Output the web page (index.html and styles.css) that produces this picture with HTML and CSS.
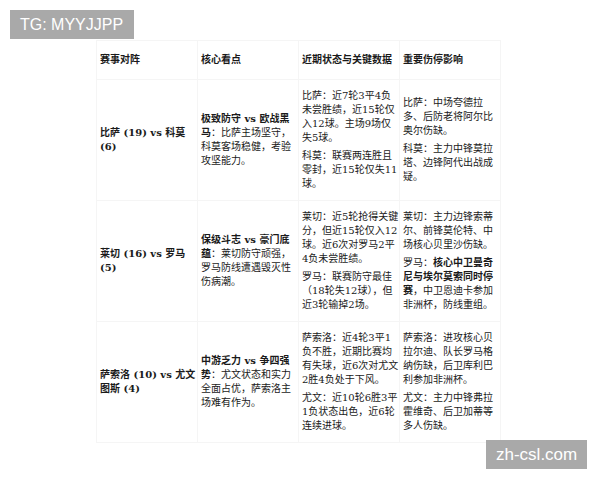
FILE: index.html
```html
<!DOCTYPE html>
<html lang="zh">
<head>
<meta charset="utf-8">
<title>赛事对阵</title>
<link rel="stylesheet" href="styles.css">
</head>
<body>
<div class="page">
  <table class="matches">
    <colgroup><col class="c"><col class="c"><col class="c"><col class="c"></colgroup>
    <thead>
      <tr><th>赛事对阵</th><th>核心看点</th><th>近期状态与关键数据</th><th>重要伤停影响</th></tr>
    </thead>
    <tbody>
      <tr>
        <td class="team">比萨 (19) vs 科莫 (6)</td>
        <td><b>极致防守 vs 欧战黑马</b>：比萨主场坚守，科莫客场稳健，考验攻坚能力。</td>
        <td><p class="para">比萨：近7轮3平4负未尝胜绩，近15轮仅入12球。主场9场仅失5球。</p><p class="para">科莫：联赛两连胜且零封，近15轮仅失11球。</p></td>
        <td><p class="para">比萨：中场夸德拉多、后防老将阿尔比奥尔伤缺。</p><p class="para">科莫：主力中锋莫拉塔、边锋阿代出战成疑。</p></td>
      </tr>
      <tr>
        <td class="team">莱切 (16) vs 罗马 (5)</td>
        <td><b>保级斗志 vs 豪门底蕴</b>：莱切防守顽强，罗马防线遭遇毁灭性伤病潮。</td>
        <td><p class="para">莱切：近5轮抢得关键分，但近15轮仅入12球。近6次对罗马2平4负未尝胜绩。</p><p class="para">罗马：联赛防守最佳（18轮失12球），但近3轮输掉2场。</p></td>
        <td><p class="para">莱切：主力边锋索蒂尔、前锋莫伦特、中场核心贝里沙伤缺。</p><p class="para">罗马：<b>核心中卫曼奇尼与埃尔莫索同时停赛</b>，中卫恩迪卡参加非洲杯，防线重组。</p></td>
      </tr>
      <tr>
        <td class="team">萨索洛 (10) vs 尤文图斯 (4)</td>
        <td><b>中游乏力 vs 争四强势</b>：尤文状态和实力全面占优，萨索洛主场难有作为。</td>
        <td><p class="para">萨索洛：近4轮3平1负不胜，近期比赛均有失球，近6次对尤文2胜4负处于下风。</p><p class="para">尤文：近10轮6胜3平1负状态出色，近6轮连续进球。</p></td>
        <td><p class="para">萨索洛：进攻核心贝拉尔迪、队长罗马格纳伤缺，后卫库利巴利参加非洲杯。</p><p class="para">尤文：主力中锋弗拉霍维奇、后卫加蒂等多人伤缺。</p></td>
      </tr>
    </tbody>
  </table>
</div>
<div class="mark mark-top">TG: MYYJJPP</div>
<div class="mark mark-bottom">zh-csl.com</div>
</body>
</html>
```
FILE: styles.css
```css
html, body {
  margin: 0;
  padding: 0;
  background: #ffffff;
}
body {
  width: 600px;
  height: 480px;
  overflow: hidden;
  position: relative;
}
.page {
  padding: 40px 0 0 96px;
}
.matches {
  border-collapse: collapse;
  table-layout: fixed;
  width: 405px;
  font-family: "DejaVu Serif", "Noto Sans CJK SC", serif;
  font-size: 10px;
  line-height: 14px;
  color: #1a1a1a;
}
.matches .c {
  width: 101px;
}
.matches th,
.matches td {
  border: 1px solid #f5f5f5;
  text-align: left;
  vertical-align: middle;
  padding: 9px 0 9px 3px;
  word-break: break-all;
}
.matches th {
  font-weight: bold;
  padding-top: 12px;
  padding-bottom: 12px;
}
.matches td.team {
  font-weight: bold;
}
.matches b {
  font-weight: bold;
}
.para {
  margin: 0;
}
.para + .para {
  margin-top: 4px;
}
.mark {
  position: absolute;
  background: #a9a9a9;
  color: #ffffff;
  font-family: "Liberation Sans", Arial, sans-serif;
  height: 29px;
  line-height: 29px;
  white-space: nowrap;
}
.mark-top {
  left: 10px;
  top: 10px;
  font-size: 16px;
  padding: 0 11px 0 10px;
}
.mark-bottom {
  left: 486px;
  top: 440px;
  font-size: 17px;
  padding: 0 10px;
}
```
